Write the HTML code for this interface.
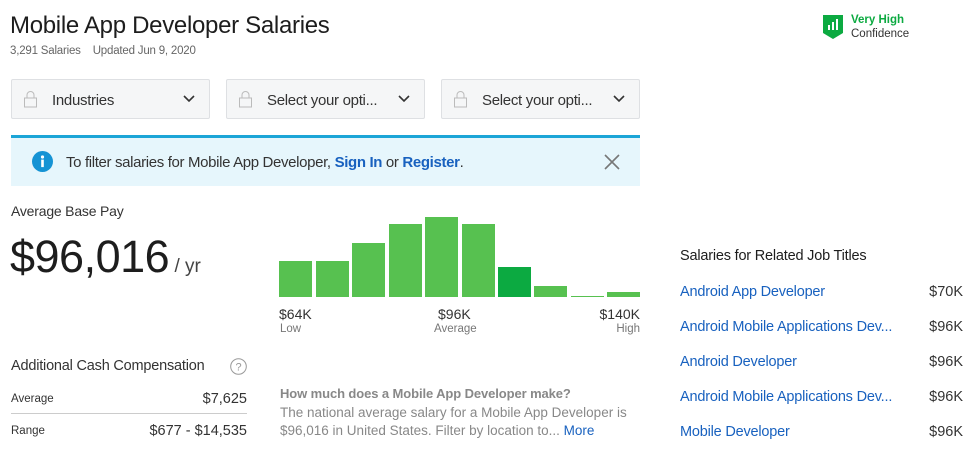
<!DOCTYPE html>
<html><head><meta charset="utf-8"><style>
*{margin:0;padding:0;box-sizing:border-box}
body{width:970px;height:453px;background:#fff;font-family:"Liberation Sans",sans-serif;color:#1d1d1d;position:relative;overflow:hidden}
.a{position:absolute;white-space:nowrap}
.sel{position:absolute;top:79px;width:199px;height:40px;background:#f5f6f7;border:1px solid #dee0e3;border-radius:2px;font-size:15px;color:#333}
.sel .t{position:absolute;left:40px;top:12px;letter-spacing:-0.3px}
.lock{position:absolute;left:12px;top:10px;width:13px;height:18px}
.chev{position:absolute;right:14px;top:15px}
.bar{position:absolute;background:#57c150;bottom:156px;width:33px}
a{color:#1861bf;text-decoration:none}
.rl{position:absolute;left:680px;font-size:14.5px;color:#1861bf;letter-spacing:-0.2px}
.rv{position:absolute;right:7px;font-size:14.5px;color:#333}
</style></head><body>
<div class="a" style="left:10px;top:12px;font-size:24px;color:#1d1d1d;letter-spacing:-0.3px">Mobile App Developer Salaries</div>
<div class="a" style="left:10px;top:45px;font-size:11.5px;color:#666;letter-spacing:-0.2px">3,291 Salaries &nbsp;&nbsp;&nbsp;Updated Jun 9, 2020</div>
<svg class="a" style="left:823px;top:15px" width="20" height="24" viewBox="0 0 20 24"><path d="M0 0H20V18L10 24L0 18Z" fill="#0caa41"/><rect x="5" y="10" width="2" height="5" fill="#fff"/><rect x="9" y="7" width="2" height="8" fill="#fff"/><rect x="13" y="4" width="2" height="11" fill="#fff"/></svg>
<div class="a" style="left:851px;top:14px;font-size:11.5px;color:#0caa41;font-weight:bold">Very High</div>
<div class="a" style="left:851px;top:28px;font-size:11.5px;color:#333">Confidence</div>

<div class="sel" style="left:11px"><svg class="lock" viewBox="0 0 13 18"><path d="M3 8V5a3.5 3.5 0 0 1 7 0v3" fill="none" stroke="#bbb"/><rect x="0.5" y="8" width="12" height="9" fill="none" stroke="#bbb"/></svg><span class="t">Industries</span><svg class="chev" width="12" height="8"><path d="M1 1l5 5 5-5" fill="none" stroke="#333" stroke-width="1.6"/></svg></div>
<div class="sel" style="left:226px"><svg class="lock" viewBox="0 0 13 18"><path d="M3 8V5a3.5 3.5 0 0 1 7 0v3" fill="none" stroke="#bbb"/><rect x="0.5" y="8" width="12" height="9" fill="none" stroke="#bbb"/></svg><span class="t">Select your opti...</span><svg class="chev" width="12" height="8"><path d="M1 1l5 5 5-5" fill="none" stroke="#333" stroke-width="1.6"/></svg></div>
<div class="sel" style="left:441px"><svg class="lock" viewBox="0 0 13 18"><path d="M3 8V5a3.5 3.5 0 0 1 7 0v3" fill="none" stroke="#bbb"/><rect x="0.5" y="8" width="12" height="9" fill="none" stroke="#bbb"/></svg><span class="t">Select your opti...</span><svg class="chev" width="12" height="8"><path d="M1 1l5 5 5-5" fill="none" stroke="#333" stroke-width="1.6"/></svg></div>

<div class="a" style="left:11px;top:135px;width:629px;height:51px;background:#e6f6fc;border-top:3px solid #1ba5d7"></div>
<svg class="a" style="left:32px;top:151px" width="21" height="21"><circle cx="10.5" cy="10.5" r="10.5" fill="#1593d4"/><circle cx="10.5" cy="6" r="1.6" fill="#fff"/><rect x="9.2" y="8.6" width="2.6" height="7.5" fill="#fff"/></svg>
<div class="a" style="left:66px;top:154px;font-size:15px;color:#333;letter-spacing:-0.35px">To filter salaries for Mobile App Developer, <a style="font-weight:bold">Sign In</a> or <a style="font-weight:bold">Register</a>.</div>
<svg class="a" style="left:604px;top:154px" width="16" height="16"><path d="M1 1L15 15M15 1L1 15" stroke="#777" stroke-width="1.6"/></svg>

<div class="a" style="left:11px;top:203px;font-size:14px;color:#333;letter-spacing:-0.2px">Average Base Pay</div>
<div class="a" style="left:10px;top:231px;font-size:45px;color:#1d1d1d;letter-spacing:-0.5px">$96,016<span style="font-size:19px;color:#444;letter-spacing:0"> / yr</span></div>

<div class="bar" style="left:279px;height:36px"></div>
<div class="bar" style="left:316px;height:36px"></div>
<div class="bar" style="left:352px;height:54px"></div>
<div class="bar" style="left:389px;height:73px"></div>
<div class="bar" style="left:425px;height:80px"></div>
<div class="bar" style="left:462px;height:73px"></div>
<div class="bar" style="left:498px;height:30px;background:#0caa41"></div>
<div class="bar" style="left:534px;height:11px"></div>
<div class="bar" style="left:571px;height:1px"></div>
<div class="bar" style="left:607px;height:5px"></div>
<div class="a" style="left:279px;top:306px;font-size:14px;color:#333">$64K</div>
<div class="a" style="left:280px;top:323px;font-size:11.5px;color:#777">Low</div>
<div class="a" style="left:438px;top:306px;font-size:14px;color:#333">$96K</div>
<div class="a" style="left:434px;top:323px;font-size:11.5px;color:#777">Average</div>
<div class="a" style="right:330px;top:306px;font-size:14px;color:#333">$140K</div>
<div class="a" style="right:330px;top:323px;font-size:11.5px;color:#777">High</div>

<div class="a" style="left:280px;top:386px;font-size:13px;color:#888;font-weight:bold;letter-spacing:-0.1px">How much does a Mobile App Developer make?</div>
<div class="a" style="left:280px;top:404px;font-size:13.5px;color:#888;line-height:18px">The national average salary for a Mobile App Developer is<br>$96,016 in United States. Filter by location to... <a>More</a></div>

<div class="a" style="left:11px;top:358px;font-size:14.5px;color:#333;letter-spacing:-0.2px">Additional Cash Compensation</div>
<svg class="a" style="left:230px;top:358px" width="17" height="17"><circle cx="8.5" cy="8.5" r="7.8" fill="none" stroke="#999"/><text x="8.5" y="12.5" font-size="11" text-anchor="middle" fill="#999" font-family="Liberation Sans">?</text></svg>
<div class="a" style="left:11px;top:393px;font-size:11.5px;color:#333">Average</div>
<div class="a" style="right:723px;top:391px;font-size:14.5px;color:#333">$7,625</div>
<div class="a" style="left:11px;top:413px;width:236px;height:1px;background:#ccc"></div>
<div class="a" style="left:11px;top:425px;font-size:11.5px;color:#333">Range</div>
<div class="a" style="right:723px;top:423px;font-size:14.5px;color:#333">$677 - $14,535</div>

<div class="a" style="left:680px;top:248px;font-size:14.5px;color:#1d1d1d;letter-spacing:-0.2px">Salaries for Related Job Titles</div>
<div class="rl" style="top:284px">Android App Developer</div><div class="rv" style="top:284px">$70K</div>
<div class="rl" style="top:319px">Android Mobile Applications Dev...</div><div class="rv" style="top:319px">$96K</div>
<div class="rl" style="top:354px">Android Developer</div><div class="rv" style="top:354px">$96K</div>
<div class="rl" style="top:389px">Android Mobile Applications Dev...</div><div class="rv" style="top:389px">$96K</div>
<div class="rl" style="top:424px">Mobile Developer</div><div class="rv" style="top:424px">$96K</div>
</body></html>
